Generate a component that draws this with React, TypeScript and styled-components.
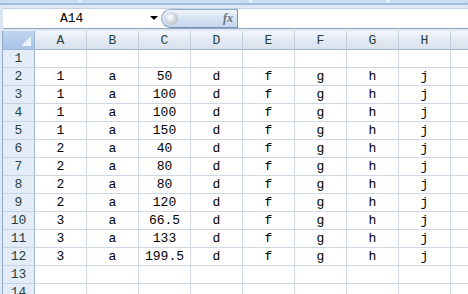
import React from "react";
import styled, { createGlobalStyle } from "styled-components";

const GlobalStyle = createGlobalStyle`
  html, body {
    margin: 0;
    padding: 0;
    width: 468px;
    height: 294px;
    overflow: hidden;
    background: #dbe6f4;
  }
`;

const Window = styled.div`
  width: 468px;
  height: 294px;
  display: flex;
  flex-direction: column;
  overflow: hidden;
  font-family: "Liberation Mono", "DejaVu Sans Mono", monospace;
`;

const Ribbon = styled.div`
  height: 8px;
  flex: none;
  display: flex;
  gap: 4px;
  background: linear-gradient(#e3edf9 0px, #e3edf9 3px, #9fbde3 3px, #9fbde3 5px, #dfe9f5 5px);
`;

const RibbonTab = styled.div<{ w: number }>`
  width: ${(p) => p.w}px;
  height: 3px;
  border-radius: 0 0 3px 3px;
  background: #c9dcf2;
  border-bottom: 1px solid #a6c1e3;
`;

const FormulaBar = styled.div`
  height: 19px;
  flex: none;
  display: flex;
  border-top: 1px solid #c2d2e6;
  border-bottom: 1px solid #8ea3bd;
  background: #fff;
  margin-left: 3px;
`;

const NameBox = styled.div`
  width: 158px;
  display: flex;
  align-items: center;
  position: relative;
  font-size: 13px;
  color: #000;
`;

const NameText = styled.span`
  margin-left: 57px;
`;

const DropArrow = styled.span`
  position: absolute;
  left: 147px;
  top: 7px;
  width: 0;
  height: 0;
  border-left: 4px solid transparent;
  border-right: 4px solid transparent;
  border-top: 4px solid #000;
`;

const FxPill = styled.div`
  width: 77px;
  display: flex;
  align-items: center;
  justify-content: space-between;
  padding: 0 4px 0 3px;
  box-sizing: border-box;
  border: 1px solid #92a9c8;
  border-bottom-color: #7d93b0;
  border-right: 1px solid #7d93b0;
  border-radius: 10px 0 0 10px;
  background: linear-gradient(#eef3fb, #d5e2f3 55%, #c4d6ee);
`;

const Knob = styled.span`
  width: 13px;
  height: 13px;
  border-radius: 50%;
  background: radial-gradient(circle at 40% 40%, #ffffff, #c7ccd3 60%, #9ea6b1);
`;

const FxLabel = styled.span`
  font-family: "Liberation Serif", "DejaVu Serif", serif;
  font-style: italic;
  font-weight: bold;
  font-size: 12px;
  color: #6a6f78;
`;

const FormulaInput = styled.div`
  flex: 1;
  background: #fff;
`;

const Gap = styled.div`
  height: 2px;
  flex: none;
  background: #dfe8f4;
`;

const SheetArea = styled.div`
  flex: 1;
  display: flex;
  overflow: hidden;
`;

const LeftFrame = styled.div`
  width: 2px;
  flex: none;
  background: #dde8f5;
  border-right: 1px solid #90a9cb;
`;

const Grid = styled.div`
  display: grid;
  grid-template-columns: 32px repeat(9, 52px);
  grid-auto-rows: 18px;
  grid-template-rows: 19px;
  background: #fff;
`;

const Corner = styled.div`
  position: relative;
  background: linear-gradient(#c0d5f0, #a9c4e9);
  border-right: 1px solid #9eb6ce;
  border-bottom: 1px solid #9eb6ce;
  box-sizing: border-box;
`;

const CornerTriangle = styled.span`
  position: absolute;
  right: 3px;
  bottom: 3px;
  width: 0;
  height: 0;
  border-left: 10px solid transparent;
  border-bottom: 10px solid #eef3fa;
`;

const ColHead = styled.div`
  display: flex;
  align-items: center;
  justify-content: center;
  font-size: 13px;
  color: #27413e;
  background: linear-gradient(#f3f6fb, #e2e9f3 50%, #d9e2ee);
  border-right: 1px solid #c3cfdf;
  border-bottom: 1px solid #9eb6ce;
  box-sizing: border-box;
`;

const RowHead = styled.div`
  display: flex;
  align-items: center;
  justify-content: center;
  font-size: 13px;
  color: #27413e;
  background: #e4ecf7;
  border-right: 1px solid #9eb6ce;
  border-bottom: 1px solid #c5d3e6;
  box-sizing: border-box;
`;

const Cell = styled.div`
  display: flex;
  align-items: center;
  justify-content: center;
  font-size: 13px;
  color: #000;
  border-right: 1px solid #d0d7e5;
  border-bottom: 1px solid #d0d7e5;
  box-sizing: border-box;
  white-space: nowrap;
`;

const columns = ["A", "B", "C", "D", "E", "F", "G", "H", ""];

const data: string[][] = [
  [],
  ["1", "a", "50", "d", "f", "g", "h", "j"],
  ["1", "a", "100", "d", "f", "g", "h", "j"],
  ["1", "a", "100", "d", "f", "g", "h", "j"],
  ["1", "a", "150", "d", "f", "g", "h", "j"],
  ["2", "a", "40", "d", "f", "g", "h", "j"],
  ["2", "a", "80", "d", "f", "g", "h", "j"],
  ["2", "a", "80", "d", "f", "g", "h", "j"],
  ["2", "a", "120", "d", "f", "g", "h", "j"],
  ["3", "a", "66.5", "d", "f", "g", "h", "j"],
  ["3", "a", "133", "d", "f", "g", "h", "j"],
  ["3", "a", "199.5", "d", "f", "g", "h", "j"],
  [],
  [],
];

export default function App() {
  return (
    <>
      <GlobalStyle />
      <Window>
        <Ribbon>
          <RibbonTab w={80} />
          <RibbonTab w={170} />
          <RibbonTab w={136} />
          <RibbonTab w={80} />
        </Ribbon>
        <FormulaBar>
          <NameBox>
            <NameText>A14</NameText>
            <DropArrow />
          </NameBox>
          <FxPill>
            <Knob />
            <FxLabel>fx</FxLabel>
          </FxPill>
          <FormulaInput />
        </FormulaBar>
        <Gap />
        <SheetArea>
          <LeftFrame />
          <Grid>
            <Corner>
              <CornerTriangle />
            </Corner>
            {columns.map((c, i) => (
              <ColHead key={i}>{c}</ColHead>
            ))}
            {data.map((row, r) => (
              <React.Fragment key={r}>
                <RowHead>{r + 1}</RowHead>
                {columns.map((_, c) => (
                  <Cell key={c}>{row[c] || ""}</Cell>
                ))}
              </React.Fragment>
            ))}
          </Grid>
        </SheetArea>
      </Window>
    </>
  );
}
